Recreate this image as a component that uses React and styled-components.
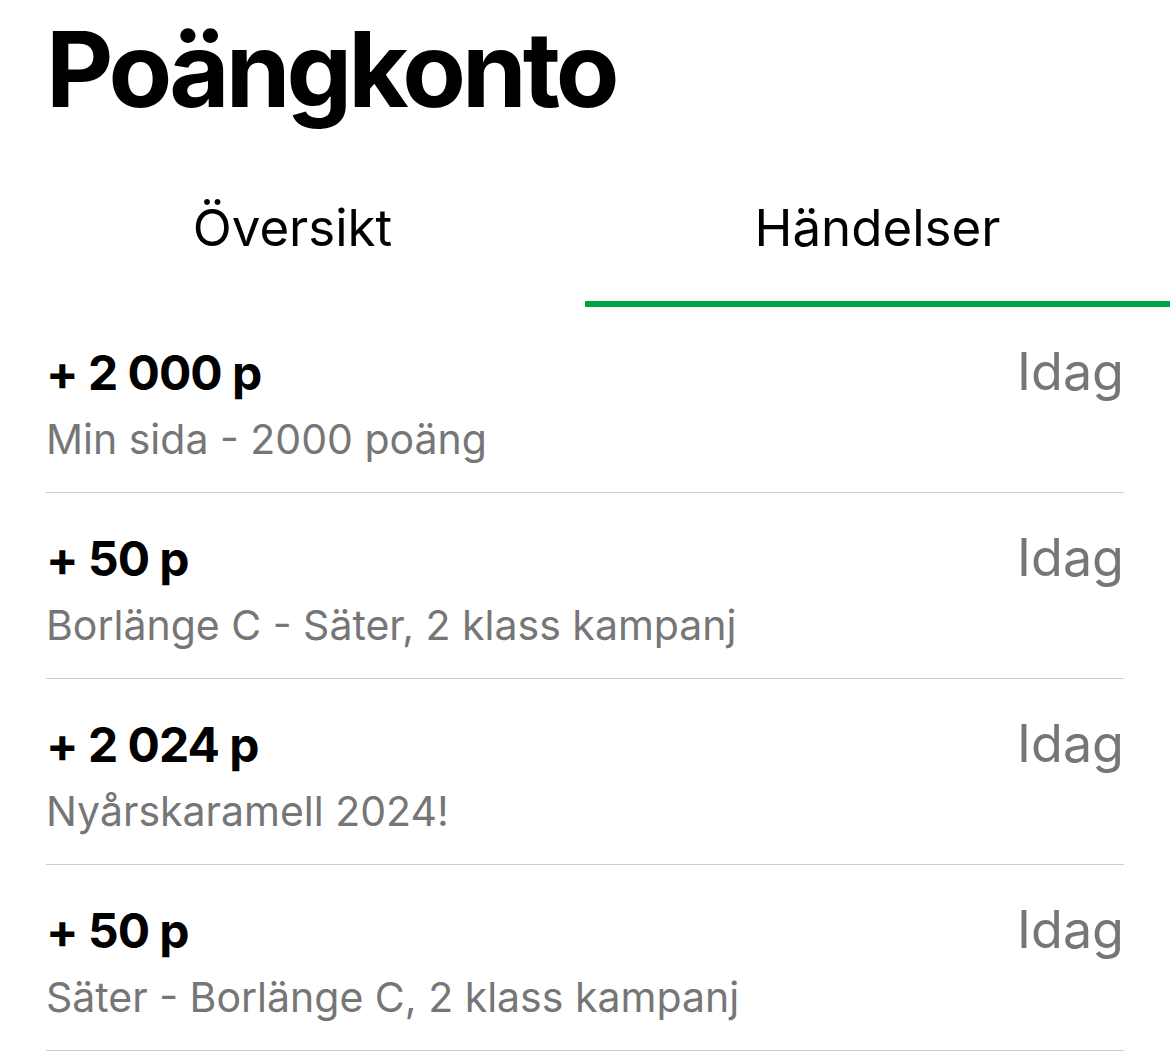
import React from 'react';
import styled, { createGlobalStyle } from 'styled-components';

const GlobalStyle = createGlobalStyle`
  body {
    margin: 0;
    background: #ffffff;
    font-family: Inter, "Noto Sans", sans-serif;
    color: #000000;
  }
`;

const Page = styled.div`
  width: 1170px;
`;

const Title = styled.h1`
  margin: 0;
  padding: 7px 46px 0;
  font-size: 104px;
  line-height: 1.2;
  font-weight: 700;
  letter-spacing: -4px;
`;

const TabBar = styled.div`
  display: grid;
  grid-template-columns: 1fr 1fr;
  margin-top: 24px;
`;

const Tab = styled.div`
  padding: 41px 0 43px;
  text-align: center;
  font-size: 51px;
  line-height: 1.2;
  font-weight: 400;
  border-bottom: 6px solid ${(p) => (p.$active ? '#00a443' : 'transparent')};
  cursor: pointer;
`;

const List = styled.div`
  padding: 0 46px;
`;

const Row = styled.div`
  display: flex;
  flex-direction: column;
  padding: 37px 0 30px;
  border-bottom: 1px solid #cccccc;
`;

const TopLine = styled.div`
  display: flex;
  justify-content: space-between;
  align-items: baseline;
  line-height: 58px;
`;

const Amount = styled.div`
  font-size: 48px;
  font-weight: 700;
  letter-spacing: -1px;
`;

const When = styled.div`
  font-size: 52px;
  line-height: 55px;
  font-weight: 400;
  color: #767676;
`;

const Description = styled.div`
  margin-top: 14px;
  font-size: 41px;
  line-height: 46px;
  color: #767676;
`;

const events = [
  { amount: '+ 2 000 p', text: 'Min sida - 2000 poäng' },
  { amount: '+ 50 p', text: 'Borlänge C - Säter, 2 klass kampanj' },
  { amount: '+ 2 024 p', text: 'Nyårskaramell 2024!' },
  { amount: '+ 50 p', text: 'Säter - Borlänge C, 2 klass kampanj' },
];

const App = () => {
  return (
    <Page>
      <GlobalStyle />
      <Title>Poängkonto</Title>
      <TabBar>
        <Tab>Översikt</Tab>
        <Tab $active>Händelser</Tab>
      </TabBar>
      <List>
        {events.map((e, i) => (
          <Row key={i}>
            <TopLine>
              <Amount>{e.amount}</Amount>
              <When>Idag</When>
            </TopLine>
            <Description>{e.text}</Description>
          </Row>
        ))}
      </List>
    </Page>
  );
};

export default App;
